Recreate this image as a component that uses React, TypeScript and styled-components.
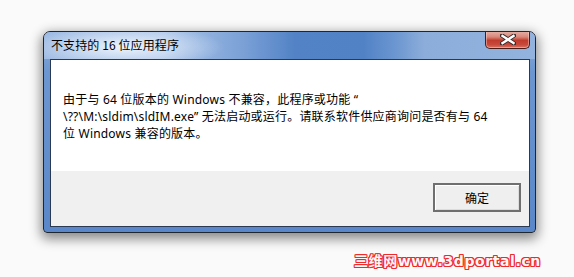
import React from "react";
import styled, { createGlobalStyle } from "styled-components";

const Global = createGlobalStyle`
  html, body { margin: 0; padding: 0; background: #fafafa; }
  #root { width: 574px; height: 277px; overflow: hidden; }
`;

const Page = styled.div`
  width: 574px;
  height: 277px;
  box-sizing: border-box;
  padding: 31px 0 0 43px;
  display: flex;
  flex-direction: column;
  background: #fafafa;
`;

const Window = styled.div`
  width: 493px;
  height: 202px;
  box-sizing: border-box;
  border: 1px solid #20262e;
  border-radius: 7px 7px 4px 4px;
  display: flex;
  flex-direction: column;
  background: linear-gradient(180deg, #8fb0dc 0px, #6c96d0 40px, #5a87c9 100%);
  box-shadow: 0 4px 12px 2px rgba(0, 0, 0, 0.45);
  overflow: hidden;
  font-family: "Noto Sans CJK SC", "Noto Sans", sans-serif;
`;

const TitleBar = styled.div`
  height: 27px;
  flex: none;
  display: flex;
  align-items: flex-start;
  justify-content: space-between;
  padding: 0 5px 0 7px;
  background:
    radial-gradient(ellipse 100px 22px at 80px 15px, rgba(236, 243, 252, 1), rgba(236, 243, 252, 0) 100%),
    linear-gradient(90deg, #9ab8e2 0px, #a9c3e8 120px, #7aa0d6 200px, #5383c6 250px, #5282c6 320px, #6a95d0 350px, #8cadda 380px, #93b3de 100%);
`;

const Title = styled.div`
  font-size: 12px;
  line-height: 16px;
  margin-top: 5px;
  color: #000;
  letter-spacing: 0.1px;
`;

const CloseButton = styled.div`
  width: 45px;
  height: 18px;
  margin-top: -1px;
  box-sizing: border-box;
  border: 1px solid #4a1c18;
  border-top: none;
  border-radius: 0 0 5px 5px;
  background: linear-gradient(180deg, #e8b2a8 0%, #d8877a 35%, #c13b2c 55%, #c8493a 80%, #d77363 100%);
  box-shadow: inset 0 0 0 1px rgba(255, 220, 210, 0.45);
  display: flex;
  align-items: center;
  justify-content: center;
`;

const Client = styled.div`
  flex: 1;
  margin: 0 5px 5px 6px;
  border: 1px solid #2a3a52;
  display: flex;
  flex-direction: column;
  background: #fff;
`;

const Body = styled.div`
  height: 111px;
  box-sizing: border-box;
  padding: 31px 0 0 12px;
  background: #fff;
`;

const Message = styled.p`
  margin: 0;
  font-family: "Noto Sans", "Noto Sans CJK SC", sans-serif;
  font-size: 12px;
  line-height: 17px;
  letter-spacing: 0.2px;
  color: #000;
  white-space: nowrap;
`;

const Footer = styled.div`
  flex: 1;
  background: #f0f0f0;
  display: flex;
  justify-content: flex-end;
  align-items: flex-start;
  padding: 12px 8px 0 0;
`;

const Button = styled.button`
  width: 88px;
  height: 29px;
  box-sizing: border-box;
  border: 2px solid #6f6f6f;
  background: #efefef;
  box-shadow: inset 1px 1px 0 #fff, inset -1px -1px 0 #dcdcdc;
  font-family: "Noto Sans CJK SC", sans-serif;
  font-size: 12px;
  color: #000;
  padding: 0;
`;

const Watermark = styled.div`
  align-self: flex-start;
  margin: 21px 0 0 311px;
  font-family: "DejaVu Sans", "Noto Sans CJK SC", sans-serif;
  font-weight: bold;
  font-size: 14px;
  line-height: 14px;
  color: #fff6f6;
  letter-spacing: 0.6px;
  text-shadow:
    1px 0 0 #ee2a2a, -1px 0 0 #ee2a2a, 0 1px 0 #ee2a2a, 0 -1px 0 #ee2a2a,
    1px 1px 0 #ee2a2a, -1px -1px 0 #ee2a2a, 1px -1px 0 #ee2a2a, -1px 1px 0 #ee2a2a;
`;

const CloseIcon = () => (
  <svg width="16" height="11" viewBox="0 0 16 11">
    <path d="M2 1.5 L14 9.5 M14 1.5 L2 9.5" stroke="#3a2a2a" strokeWidth="4.2" strokeLinecap="square" />
    <path d="M2.5 2 L13.5 9 M13.5 2 L2.5 9" stroke="#fff" strokeWidth="2.4" strokeLinecap="square" />
  </svg>
);

export default function App() {
  return (
    <>
      <Global />
      <Page>
        <Window>
          <TitleBar>
            <Title>不支持的 16 位应用程序</Title>
            <CloseButton>
              <CloseIcon />
            </CloseButton>
          </TitleBar>
          <Client>
            <Body>
              <Message>由于与 64 位版本的 Windows 不兼容，此程序或功能 “</Message>
              <Message>\??\M:\sldim\sldIM.exe” 无法启动或运行。请联系软件供应商询问是否有与 64</Message>
              <Message>位 Windows 兼容的版本。</Message>
            </Body>
            <Footer>
              <Button>确定</Button>
            </Footer>
          </Client>
        </Window>
        <Watermark>三维网www.3dportal.cn</Watermark>
      </Page>
    </>
  );
}
